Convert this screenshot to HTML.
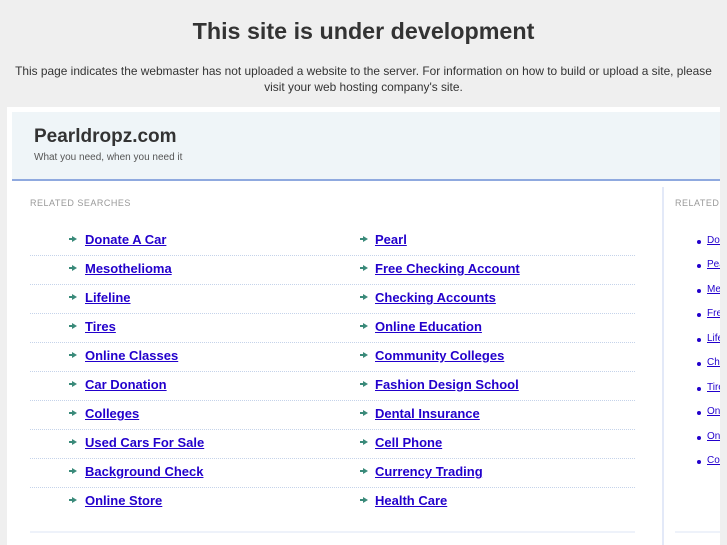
<!DOCTYPE html>
<html><head><style>
html,body{margin:0;width:727px;height:545px;overflow:hidden}
body{background:#efefef;font-family:"Liberation Sans",Arial,sans-serif;position:relative}
#w{position:absolute;left:0;top:0;width:727px;height:545px;overflow:hidden}
h1{position:absolute;top:18px;left:0;width:727px;text-align:center;margin:0;font-size:23.3px;color:#333;font-weight:bold}
.intro{position:absolute;top:63px;left:0;width:727px;text-align:center;font-size:11.9px;line-height:16px;color:#333}
.box{position:absolute;left:7px;top:107px;width:713px;height:450px;background:#fff}
.hdr{position:absolute;left:12px;top:112px;width:708px;height:67px;background:#eff5f8;border-bottom:2px solid #8fa9df}
.hdr .t{position:absolute;left:22px;top:14px;font-size:19px;font-weight:bold;color:#333}
.hdr .s{position:absolute;left:22px;top:40px;font-size:10px;color:#555}
.lbl{position:absolute;font-size:9px;color:#999;letter-spacing:.5px;white-space:nowrap}
.it{position:absolute;height:29px;border-bottom:1px dotted #c5d3ea;width:605px;left:30px}
.it a{position:absolute;top:6px;font-size:13px;font-weight:bold;color:#2200cc;text-decoration:underline;white-space:nowrap}
.ar{position:absolute;top:10px;width:0;height:0;border-left:5px solid #3a8a7a;border-top:3px solid transparent;border-bottom:3px solid transparent}
.ar:before{content:"";position:absolute;left:-8px;top:-1px;width:3px;height:2px;background:#3a8a7a}
.vl{position:absolute;left:662px;top:187px;width:2px;height:360px;background:#e3e9f8}
.r{position:absolute;left:697px;font-size:10px;width:23px;height:14px;overflow:hidden}
.r a{color:#2200cc;text-decoration:underline;position:absolute;left:10px;top:0;white-space:nowrap}
.r:before{content:"";position:absolute;left:0;top:5px;width:4px;height:4px;border-radius:50%;background:#2200cc}
.bl{position:absolute;top:531px;height:2px;background:#eef2fa}
.gr{position:absolute;left:720px;top:0;width:7px;height:545px;background:#efefef}
</style></head><body><div id="w">
<h1>This site is under development</h1>
<div class="intro">This page indicates the webmaster has not uploaded a website to the server. For information on how to build or upload a site, please<br>visit your web hosting company's site.</div>
<div class="box"></div>
<div class="hdr"><div class="t">Pearldropz.com</div><div class="s">What you need, when you need it</div></div>
<div class="lbl" style="left:30px;top:198px">RELATED SEARCHES</div>
<div class="lbl" style="left:675px;top:198px">RELATED SEARCHES</div>
<div class="vl"></div>
<div class="it" style="top:226px"><span class="ar" style="left:42px"></span><a style="left:55px">Donate A Car</a><span class="ar" style="left:333px"></span><a style="left:345px">Pearl</a></div>
<div class="it" style="top:255px"><span class="ar" style="left:42px"></span><a style="left:55px">Mesothelioma</a><span class="ar" style="left:333px"></span><a style="left:345px">Free Checking Account</a></div>
<div class="it" style="top:284px"><span class="ar" style="left:42px"></span><a style="left:55px">Lifeline</a><span class="ar" style="left:333px"></span><a style="left:345px">Checking Accounts</a></div>
<div class="it" style="top:313px"><span class="ar" style="left:42px"></span><a style="left:55px">Tires</a><span class="ar" style="left:333px"></span><a style="left:345px">Online Education</a></div>
<div class="it" style="top:342px"><span class="ar" style="left:42px"></span><a style="left:55px">Online Classes</a><span class="ar" style="left:333px"></span><a style="left:345px">Community Colleges</a></div>
<div class="it" style="top:371px"><span class="ar" style="left:42px"></span><a style="left:55px">Car Donation</a><span class="ar" style="left:333px"></span><a style="left:345px">Fashion Design School</a></div>
<div class="it" style="top:400px"><span class="ar" style="left:42px"></span><a style="left:55px">Colleges</a><span class="ar" style="left:333px"></span><a style="left:345px">Dental Insurance</a></div>
<div class="it" style="top:429px"><span class="ar" style="left:42px"></span><a style="left:55px">Used Cars For Sale</a><span class="ar" style="left:333px"></span><a style="left:345px">Cell Phone</a></div>
<div class="it" style="top:458px"><span class="ar" style="left:42px"></span><a style="left:55px">Background Check</a><span class="ar" style="left:333px"></span><a style="left:345px">Currency Trading</a></div>
<div class="it" style="top:487px;border:none"><span class="ar" style="left:42px"></span><a style="left:55px">Online Store</a><span class="ar" style="left:333px"></span><a style="left:345px">Health Care</a></div>
<div class="r" style="top:235px"><a>Donate A Car</a></div>
<div class="r" style="top:259px"><a>Pearl</a></div>
<div class="r" style="top:284px"><a>Mesothelioma</a></div>
<div class="r" style="top:308px"><a>Free Checking</a></div>
<div class="r" style="top:333px"><a>Lifeline</a></div>
<div class="r" style="top:357px"><a>Checking</a></div>
<div class="r" style="top:382px"><a>Tires</a></div>
<div class="r" style="top:406px"><a>Online</a></div>
<div class="r" style="top:431px"><a>Online</a></div>
<div class="r" style="top:455px"><a>Community</a></div>
<div class="bl" style="left:30px;width:605px"></div>
<div class="bl" style="left:675px;width:45px"></div>
<div class="gr"></div>
</div></body></html>
